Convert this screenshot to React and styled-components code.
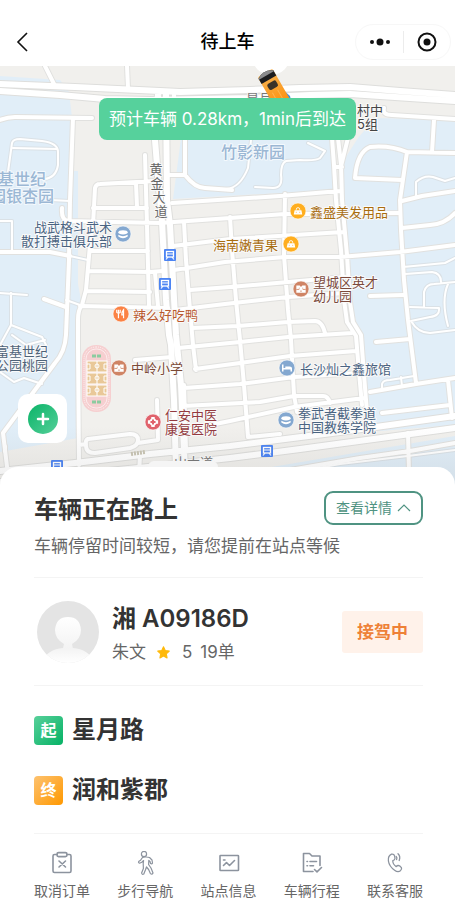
import React from "react";
import styled, { createGlobalStyle, css } from "styled-components";

const GlobalStyle = createGlobalStyle`
  *, *::before, *::after { box-sizing: border-box; }
  body {
    margin: 0;
    background: #fff;
    color: #333;
    font-family: Inter, "Noto Sans CJK SC", sans-serif;
  }
  button { font: inherit; color: inherit; border: 0; padding: 0; background: none; cursor: pointer; }
  h1, h2, p { margin: 0; }
`;

const Page = styled.div`
  display: flex;
  flex-direction: column;
  min-height: 100vh;
  background: #fff;
`;

/* ---------- header ---------- */

const Header = styled.header`
  display: grid;
  grid-template-columns: 1fr auto 1fr;
  align-items: center;
  height: 66px;
  padding: 18px 4px 0;
`;

const BackButton = styled.button`
  display: flex;
  justify-self: start;
  margin-left: 8px;
`;

const Title = styled.h1`
  font-size: 18px;
  line-height: 26px;
  font-weight: 500;
  color: #000;
`;

const Capsule = styled.div`
  justify-self: end;
  display: flex;
  align-items: center;
  height: 36px;
  border: 1px solid #f7f7f7;
  border-radius: 18px;
`;

const CapsuleButton = styled.button`
  display: flex;
  align-items: center;
  justify-content: center;
  width: 47px;
  height: 22px;
  & + & { border-left: 1px solid #ececec; }
`;

/* ---------- map ---------- */

const MapArea = styled.section`
  position: relative;
  height: 420px;
  overflow: hidden;
  background: #f1f0ed;
`;

const MapSvg = styled.svg`
  display: block;
  width: 100%;
  height: 100%;
`;

const Eta = styled.div`
  position: absolute;
  top: 32px;
  left: 0;
  right: 0;
  display: flex;
  justify-content: center;
`;

const EtaPill = styled.p`
  padding: 8px 10px;
  border-radius: 8px;
  background: #56d19c;
  color: #fff;
  font-size: 17px;
  line-height: 26px;
  font-weight: 400;
`;

const AddButton = styled.button`
  position: absolute;
  left: 18px;
  bottom: 43px;
  display: flex;
  align-items: center;
  justify-content: center;
  width: 49px;
  height: 49px;
  border-radius: 10px;
  background: #fff;
`;

const MapText = styled.text`
  font-size: ${(p) => (p.$area ? 16 : 13)}px;
  font-weight: ${(p) => (p.$area ? 500 : 400)};
  fill: ${(p) => p.$color};
  stroke: ${(p) => (p.$area ? "#f4f9fd" : "#fafafa")};
  stroke-width: 2px;
  stroke-linejoin: round;
  paint-order: stroke;
`;

/* ---------- bottom sheet ---------- */

const Sheet = styled.main`
  position: relative;
  flex: 1;
  margin-top: -19px;
  padding: 24px 32px 0 34px;
  border-radius: 18px 18px 0 0;
  background: #fff;
`;

const section = css`
  border-bottom: 1px solid #f4f4f4;
`;

const StatusBlock = styled.section`
  ${section}
  padding-bottom: 19px;
`;

const StatusRow = styled.div`
  display: flex;
  align-items: center;
  justify-content: space-between;
`;

const Heading = styled.h2`
  padding-top: 4px;
  font-size: 24px;
  line-height: 30px;
  font-weight: 700;
`;

const DetailButton = styled.button`
  display: flex;
  align-items: center;
  gap: 5px;
  height: 34px;
  padding: 0 10px;
  border: 2px solid #4f9382;
  border-radius: 9px;
  color: #4f9382;
  font-size: 14px;
  line-height: 20px;
`;

const Hint = styled.p`
  margin-top: 9px;
  font-size: 17px;
  line-height: 24px;
  font-weight: 400;
  color: #666;
`;

const DriverBlock = styled.section`
  ${section}
  display: flex;
  align-items: center;
  padding: 22px 0 21px 2px;
`;

const DriverInfo = styled.div`
  flex: 1;
  display: flex;
  flex-direction: column;
  gap: 5px;
  padding: 3px 0 0 12px;
`;

const Plate = styled.p`
  font-size: 24px;
  line-height: 32px;
  font-weight: 600;
`;

const DriverMeta = styled.p`
  display: flex;
  align-items: center;
  font-size: 17px;
  line-height: 24px;
  font-weight: 400;
  color: #666;
`;

const Rating = styled.span`
  display: inline-flex;
  align-items: center;
  gap: 12px;
  padding: 0 8px 0 11px;
`;

const StateTag = styled.span`
  padding: 8px 15px;
  border-radius: 3px;
  background: #fff2ea;
  color: #ee8137;
  font-size: 17px;
  line-height: 26px;
  font-weight: 700;
`;

const RouteList = styled.ul`
  ${section}
  display: flex;
  flex-direction: column;
  gap: 28px;
  margin: 0;
  padding: 28px 0 27px;
  list-style: none;
`;

const Stop = styled.li`
  display: flex;
  align-items: center;
  gap: 9px;
  font-size: 24px;
  line-height: 32px;
  font-weight: 700;
`;

const StopBadge = styled.span`
  display: flex;
  align-items: center;
  justify-content: center;
  width: 29px;
  height: 29px;
  border-radius: 4px;
  color: #fff;
  font-size: 16px;
  line-height: 24px;
  background: ${(p) =>
    p.$end
      ? "linear-gradient(135deg, #fdc270, #ff9800)"
      : "linear-gradient(135deg, #58d09a, #06b265)"};
`;

const Actions = styled.nav`
  display: flex;
  justify-content: space-between;
  padding: 17px 0 13px;
`;

const Action = styled.button`
  display: flex;
  flex-direction: column;
  align-items: center;
  gap: 6px;
  color: #666;
  font-size: 14px;
  line-height: 20px;
  white-space: nowrap;
`;

/* ---------- map data ---------- */

const wideRoads = [
  "M0 84 L75 87 L160 91 L180 92 L250 90 L300 88 L350 87 L400 91 L455 95",
  "M0 91 L60 95 L105 99 L150 100 L250 98 L310 95 L350 94 L455 101",
  "M158 94 L155 140 L157 165 L162 222 L166 300 L169 335 L171 345 L174 400 L176 470",
  "M166 94 L167 200 L170 225 L173 280 L176 335 L181 385 L184 450 L185 470",
  "M0 471 L75 463 L150 454 L230 446 L340 432 L455 416",
  "M0 482 L148 467 L230 458 L300 449 L455 428",
];

const roads = [
  "M332 138 L334 165 L336 200 L341 250 L344 300 L347 322 L356 336 L359 372 L362 405",
  "M338 138 L341 165 L342 200 L347 255 L350 302 L353 322 L361 335 L364 375 L368 425",
  "M0 252 L50 252 L70 256",
  "M73 118 L70 200 L69 260 L66 335 Q65 352 55 363 L3 433 L8 475",
  "M0 120 Q8 117 15 117 L92 118",
  "M45 66 L54 84",
  "M127 66 L128 88",
  "M174 92 L174 104",
  "M93 225 L95 188 Q96 184 100 184 L155 181",
  "M136 183 L137 207",
  "M145 155 L147 225 L149 306",
  "M93 220 L90 245 L86 290 L82 305 Q78 310 78 320 L78 345 L79 465",
  "M62 208 Q61 220 68 221 L160 223 L230 218 L285 214 L398 213",
  "M93 208 L147 208",
  "M91 251 L148 251",
  "M88 271 L150 272 L163 271",
  "M87 291 L150 292",
  "M155 273 L158 306",
  "M80 306 L168 308",
  "M173 246 L230 239 L343 232",
  "M174 270 L225 262 L285 257 L340 257 L400 252 L455 245",
  "M190 290 L230 287 L345 277",
  "M175 310 L225 304 L288 297 L345 293",
  "M192 328 L238 326 L288 322 L315 321 Q322 321 325 333",
  "M178 348 L240 342 L288 337 L352 333",
  "M195 369 L240 363 L290 356 L356 351",
  "M184 388 L240 384 L294 377 L360 373",
  "M183 406 L260 402 L294 396 L323 396 Q328 396 330 403",
  "M186 430 L230 421 L294 407 L364 398",
  "M184 222 L186 260 L190 310 L193 345 L196 370",
  "M184 385 L186 450",
  "M230 217 L232 250 L236 300 L240 340 L244 385 L248 437 L280 434",
  "M285 194 L284 255 L288 310 L291 340 L294 395 L297 412",
  "M172 203 L280 196 L340 191",
  "M167 175 L185 175",
  "M185 138 L185 175 Q195 188 205 188 L232 190",
  "M348 138 L341 166",
  "M334 167 L342 167",
  "M384 108 Q382 115 392 115 L455 119",
  "M434 120 L432 152",
  "M455 153 L407 152 Q390 145 370 147 Q357 152 355 178 L402 180",
  "M407 152 L400 200 L401 230 L404 280 L408 320 L416 383",
  "M402 228 L430 225 Q445 224 455 213",
  "M402 201 L422 196 L455 191",
  "M370 296 L403 295",
  "M376 342 L410 339",
  "M370 392 L416 384 L455 378",
  "M448 380 L452 418",
  "M382 413 L450 405",
  "M135 360 L172 357",
  "M157 400 L158 440 L138 443",
  "M79 445 L86 444",
  "M88 439 L130 434 Q138 434 138 440 Q138 446 130 448 L95 453 Q86 453 86 446 Q85 440 88 439",
  "M408 433 L409 474",
  "M200 482 L290 470 L360 458 L410 451 L455 443",
  "M44 299 L66 307",
  "M140 455 L139 474",
  "M5 446 L5 452",
];

const thinRoads = [
  "M8 172 L12 143 Q13 139 20 139 L42 141 Q58 143 58 152 L58 165 Q56 178 44 179",
  "M13 148 L57 149",
  "M50 200 L70 201",
  "M0 221 L12 221 L12 250",
  "M70 256 L88 260",
  "M0 293 L27 295",
  "M11 293 L11 325 L42 337 L46 345",
  "M11 325 L0 345",
  "M66 300 L80 305",
  "M0 372 L14 382 L24 378 L42 384 M12 335 L26 345 L45 340",
  "M308 143 L325 151 L320 158 Q316 161 300 160 L286 161 Q281 163 281 175 Q283 188 273 188 L255 187",
  "M251 140 L248 168 Q240 188 226 189",
  "M416 196 L416 182 Q424 175 433 177 L445 181 L455 178",
  "M403 267 L445 263 L455 258",
  "M405 274 L432 272 Q441 273 441 282",
  "M424 307 L424 292 Q426 284 434 284 L455 282",
  "M448 284 Q441 300 448 326",
  "M410 307 L439 308 Q440 316 430 317 L411 321 Q418 333 430 333 L455 330",
  "M382 390 L382 384 Q383 380 390 380 L414 376",
  "M401 377 L402 386",
  "M240 482 L340 464 L408 456 L455 450",
];

const drawRoads = (list, color, width) => (
  <path d={list.join(" ")} fill="none" stroke={color} strokeWidth={width} strokeLinejoin="round" strokeLinecap="round" />
);

const places = [
  { x: 112, y: 232, anchor: "end", color: "#4a6482", lines: ["战武格斗武术", "散打搏击俱乐部"] },
  { x: 310, y: 217, color: "#a96d10", lines: ["鑫盛美发用品"] },
  { x: 278, y: 250, anchor: "end", color: "#a96d10", lines: ["海南嫩青果"] },
  { x: 313, y: 287, color: "#7b4a3c", lines: ["望城区英才", "幼儿园"] },
  { x: 133, y: 320, color: "#b95a30", lines: ["辣么好吃鸭"] },
  { x: 131, y: 373, color: "#7b4a36", lines: ["中岭小学"] },
  { x: 300, y: 374, color: "#4a6482", lines: ["长沙灿之鑫旅馆"] },
  { x: 165, y: 420, color: "#933a40", lines: ["仁安中医", "康复医院"] },
  { x: 298, y: 418, color: "#4a6482", lines: ["拳武者截拳道", "中国教练学院"] },
  { x: 48, y: 356, anchor: "end", color: "#4e6379", lines: ["富基世纪", "公园桃园"] },
  { x: 357, y: 115, color: "#444", lines: ["村中", "5组"] },
  { x: 246, y: 103, color: "#777", lines: ["星月路"] },
  { x: 46, y: 185, anchor: "end", area: true, color: "#9bb7d4", lines: ["基世纪", "园银杏园"] },
  { x: 221, y: 158, area: true, color: "#9bb7d4", lines: ["竹影新园"] },
  { x: 174, y: 467, color: "#777", lines: ["山大道"] },
];

const roadName = [
  ["黄", 156, 174],
  ["金", 157, 188],
  ["大", 159, 202],
  ["道", 161, 216],
];

const glyphs = {
  bag: (
    <>
      <path d="M-4 -1 H4 L5 4 H-5 Z" fill="#fff" />
      <path d="M-2 -1 V-2 a2 2 0 0 1 4 0 V-1" fill="none" stroke="#fff" strokeWidth="1" />
      <path d="M-2 1 v1 M2 1 v1" stroke="#ffac1c" strokeWidth="1" />
    </>
  ),
  drum: (
    <>
      <ellipse cy="-2" rx="5.500" ry="2.500" fill="#fff" />
      <path d="M-5.500 1 Q0 4 5.500 1 V3 Q0 7 -5.500 3 Z" fill="#fff" />
    </>
  ),
  school: (
    <>
      <path d="M-5.500 -4 H-1.500 L0 -2.500 L1.500 -4 H5.500 V4.500 H-5.500 Z" fill="#fff" />
      <path d="M-5.500 0.500 H-2 M2 0.500 H5.500 M-2 -1.500 v1 M2 -1.500 v1 M-1 2.500 h2" stroke="#cf8465" strokeWidth="1" />
    </>
  ),
  food: (
    <path d="M-3 -5 v10 M-5 -5 v3 q2 2 4 0 v-3 M3 5 v-10 q-2 2 -2 6 h2" fill="none" stroke="#fff" strokeWidth="1.4" />
  ),
  bed: <path d="M-5 -4 V4 M5 4 V1 H-5 M-2 -1 H3 Q5 -1 5 1" fill="none" stroke="#fff" strokeWidth="1.8" />,
  medical: (
    <>
      <path d="M-2 -6 H2 V-4 L4 -2 H6 V2 H4 L2 4 V6 H-2 V4 L-4 2 H-6 V-2 H-4 L-2 -4 Z" fill="#fff" />
      <path d="M0 -3 V3 M-3 0 H3" stroke="#e0626c" strokeWidth="2.400" />
    </>
  ),
};

const pois = [
  [298, 211, "#ffae1f", "bag"],
  [291, 244, "#ffae1f", "bag"],
  [123, 234, "#84a8d0", "drum"],
  [301, 289, "#cf8465", "school"],
  [121, 314, "#fb8244", "food"],
  [119, 368, "#cf8465", "school"],
  [287, 368, "#84a8d0", "bed"],
  [153, 422, "#e0626c", "medical"],
  [286, 420, "#84a8d0", "drum"],
];

const stations = [
  [170, 255],
  [165, 284],
  [267, 451],
  [57, 466],
];

function CityMap() {
  return (
    <MapSvg viewBox="0 66 455 420" preserveAspectRatio="xMidYMid slice" role="img" aria-label="地图">
      <defs>
        <linearGradient id="shade" x1="0" y1="0" x2="0" y2="1">
          <stop offset="0" stopColor="#555" stopOpacity="0" />
          <stop offset="1" stopColor="#555" stopOpacity="0.1" />
        </linearGradient>
        <linearGradient id="car" x1="0" y1="0" x2="0" y2="1">
          <stop offset="0" stopColor="#f6b352" />
          <stop offset="1" stopColor="#ff8a00" />
        </linearGradient>
      </defs>
      <rect y="66" width="455" height="420" fill="#f1f0ed" />
      <g fill="#e1eef8">
        <path d="M0 76 L60 80 L69 92 L72 118 V171 H78 V284 L81 300 L77 318 L78 438 L0 452 Z" />
        <path d="M181 138 L173 199 L333 190 L331 138 Z" />
        <path d="M375 118 L455 120 V425 L368 432 L360 335 L350 300 L343 200 L344 160 L358 138 Z" />
        <path d="M160 486 L455 436 V486 Z" />
      </g>
      {drawRoads(thinRoads, "#dae1e6", 4)}
      {drawRoads(roads, "#e1e1df", 6)}
      {drawRoads(wideRoads, "#dededc", 8)}
      {drawRoads(thinRoads, "#fff", 2)}
      {drawRoads(roads, "#fff", 4)}
      {drawRoads(wideRoads, "#fff", 6)}

      <g>
        <rect x="82" y="345" width="29" height="67" rx="14" fill="#f6cfd0" />
        <rect x="84" y="347" width="25" height="63" rx="12" fill="none" stroke="#fff" strokeOpacity="0.7" strokeDasharray="1 1" />
        <rect x="86" y="349" width="21" height="59" rx="10" fill="none" stroke="#fff" strokeOpacity="0.6" />
        {[361, 373, 385].map((y) => (
          <g key={y} stroke="#fff" fill="none">
            <rect x="87" y={y} width="20" height="11" fill="#e9c898" />
            <path d={`M97 ${y} v11 M87 ${y + 3} h3 v5 h-3 M107 ${y + 3} h-3 v5 h3`} />
            <circle cx="97" cy={y + 5} r="2" />
          </g>
        ))}
        <path d="M92 356 h9 M92 402 h9" stroke="#8ccca0" strokeWidth="3" strokeDasharray="4 1" />
      </g>
      <path d="M131 454 L145 452" stroke="#c9c5b4" strokeWidth="4" strokeDasharray="2 1" />

      {roadName.map(([t, x, y]) => (
        <MapText key={t} x={x} y={y} $color="#666" textAnchor="middle">{t}</MapText>
      ))}
      {places.map((p) => (
        <MapText key={p.lines.join("")} $color={p.color} $area={p.area} textAnchor={p.anchor || "start"}>
          {p.lines.map((line, i) => (
            <tspan key={line} x={p.area && i ? p.x + 8 : p.x} y={p.y + i * (p.area ? 17 : 14)}>{line}</tspan>
          ))}
        </MapText>
      ))}
      {pois.map(([x, y, color, kind]) => (
        <g key={`${x}-${y}`} transform={`translate(${x} ${y})`}>
          <circle r="8" fill={color} stroke="#fff" strokeOpacity="0.6" />
          <g transform="scale(0.85)">{glyphs[kind]}</g>
        </g>
      ))}
      {stations.map(([x, y]) => (
        <g key={`${x}-${y}`} transform={`translate(${x} ${y})`}>
          <rect x="-6" y="-6" width="12" height="12" rx="1" fill="#4c84f3" />
          <rect x="-3.500" y="-3.500" width="7" height="5.500" fill="none" stroke="#fff" strokeWidth="1.3" />
          <path d="M-3 -1 H3 M-2 2 L-4 4.500 M2 2 L4 4.500" stroke="#fff" strokeWidth="1.2" />
        </g>
      ))}
      <rect y="426" width="455" height="60" fill="url(#shade)" />
      <rect x="148" y="461" width="70" height="20" rx="6" fill="#f5f5f5" />

      <circle cx="271" cy="56" r="19" fill="#fff" />
      <path d="M281 88 L290 96 L292 104 L282 104 Z" fill="#3f8fe0" />
      <g transform="translate(265 74) rotate(-30)">
        <rect x="-8" y="-1" width="17" height="42" rx="2" fill="url(#car)" />
        <path d="M-8 1 Q0 -5 9 1 V7 H-8 Z" fill="#1d1d1f" />
        <path d="M-8 1 Q0 -5 9 1 V2 H-8 Z" fill="#8b8b8d" />
        <rect x="-4" y="10" width="10" height="7" rx="2" fill="#3a3228" />
        <path d="M-3 20 V38 M3 20 V38" stroke="#ffc978" strokeOpacity="0.5" />
      </g>
    </MapSvg>
  );
}

/* ---------- icons ---------- */

const ActionIcon = ({ children }) => (
  <svg width="24" height="24" viewBox="0 0 24 24" fill="none" stroke="#8c939e" strokeWidth="1.6" strokeLinecap="round" strokeLinejoin="round" aria-hidden="true">
    {children}
  </svg>
);

const actions = [
  {
    label: "取消订单",
    icon: (
      <>
        <path d="M7 3.500 H4.500 Q3 3.500 3 5 V20 Q3 21.500 4.500 21.500 H19.500 Q21 21.500 21 20 V5 Q21 3.500 19.500 3.500 H17" />
        <rect x="7" y="1.600" width="10" height="4" rx="1.600" />
        <path d="M9 10 L15.500 16 M15.500 10 L9 16" />
      </>
    ),
  },
  {
    label: "步行导航",
    icon: (
      <g strokeWidth="1.2">
        <circle cx="11" cy="3" r="2.600" />
        <path d="M9.500 6.500 Q11 5.500 13.500 6 L16.500 6.500 L19 9 L19.500 12 Q19 13.500 17.600 12.600 L17 10.500 L15.800 9.500 L15.600 13.500 L18 17 L20 22 Q19.200 24 17.400 22.600 L15.600 18.500 L13.500 16 L12.400 19 L10.800 23 Q9 24 8.600 22 L10.400 17.500 L10.200 12.500 L10.600 9.500 L8.800 11.200 L6.600 12.200 Q4.800 11.500 6 10.200 L7.600 9.200 Z" />
      </g>
    ),
  },
  {
    label: "站点信息",
    icon: (
      <>
        <rect x="3" y="4.500" width="18.500" height="15" rx="0.600" />
        <path d="M6.500 14.500 L9.500 11.500 L12.500 14.500 L17.500 9.500 M6.500 9 H8" />
      </>
    ),
  },
  {
    label: "车辆行程",
    icon: (
      <>
        <path d="M12 20.500 H3.500 V2.500 H9.500 L12 5 H20 V14.500 M12 20.500 H13" />
        <path d="M7 10.500 H7.500 M10 10.500 H16.500 M7 14.800 H7.500 M10 14.800 H13.500 M14.500 18.500 L17 20.800 L21.500 16.500" />
      </>
    ),
  },
  {
    label: "联系客服",
    icon: (
      <g strokeWidth="1.300">
        <path d="M8.500 3.200 Q11 2.800 11.600 5 L12 7.500 Q11.800 9.300 9.800 9.600 Q9.600 13 13.200 15.600 Q14.800 13.800 16.800 15 L18.400 16.600 Q19.200 18.400 17.400 19.800 Q14.800 21.600 11.600 19.200 Q6.200 15.400 5.400 10 Q4.800 5 8.500 3.200 Z" />
        <path d="M13.200 5.500 Q14.400 6.600 13.600 8.600 M15 2.800 Q17.800 5.500 16.200 9.500" />
      </g>
    ),
  },
];

export default function App() {
  return (
    <Page>
      <GlobalStyle />
      <Header>
        <BackButton aria-label="返回">
          <svg width="20" height="24" viewBox="0 0 20 24" fill="none" stroke="#111" strokeWidth="1.600">
            <path d="M15 3 L6 12 L15 21" />
          </svg>
        </BackButton>
        <Title>待上车</Title>
        <Capsule>
          <CapsuleButton aria-label="更多">
            <svg width="22" height="8" viewBox="0 0 22 8" fill="#111">
              <circle cx="3" cy="4" r="2" />
              <circle cx="11" cy="4" r="3.500" />
              <circle cx="19" cy="4" r="2" />
            </svg>
          </CapsuleButton>
          <CapsuleButton aria-label="关闭">
            <svg width="20" height="20" viewBox="0 0 20 20">
              <circle cx="10" cy="10" r="8.500" fill="none" stroke="#111" strokeWidth="2" />
              <circle cx="10" cy="10" r="3.500" fill="#111" />
            </svg>
          </CapsuleButton>
        </Capsule>
      </Header>

      <MapArea>
        <CityMap />
        <Eta>
          <EtaPill>预计车辆 0.28km，1min后到达</EtaPill>
        </Eta>
        <AddButton aria-label="添加">
          <svg width="30" height="30" viewBox="0 0 30 30">
            <defs>
              <linearGradient id="add" x1="0" y1="0" x2="1" y2="1">
                <stop offset="0" stopColor="#0ab468" />
                <stop offset="1" stopColor="#55cf99" />
              </linearGradient>
            </defs>
            <circle cx="15" cy="15" r="15" fill="url(#add)" />
            <path d="M15 10 V20 M10 15 H20" stroke="#fff" strokeWidth="2.500" strokeLinecap="round" />
          </svg>
        </AddButton>
      </MapArea>

      <Sheet>
        <StatusBlock>
          <StatusRow>
            <Heading>车辆正在路上</Heading>
            <DetailButton>
              查看详情
              <svg width="14" height="10" viewBox="0 0 14 10" fill="none" stroke="#4f9382" strokeWidth="1.200">
                <path d="M1 8 L7 2 L13 8" />
              </svg>
            </DetailButton>
          </StatusRow>
          <Hint>车辆停留时间较短，请您提前在站点等候</Hint>
        </StatusBlock>

        <DriverBlock>
          <svg width="64" height="62" viewBox="0 0 64 62" aria-hidden="true">
            <defs>
              <clipPath id="avatar"><circle cx="32" cy="31" r="31" /></clipPath>
              <linearGradient id="face" x1="0" y1="0" x2="0" y2="1">
                <stop offset="0" stopColor="#fff" />
                <stop offset="1" stopColor="#f3f3f3" />
              </linearGradient>
              <linearGradient id="body" x1="0" y1="0" x2="0" y2="1">
                <stop offset="0" stopColor="#f3f3f3" />
                <stop offset="1" stopColor="#fff" />
              </linearGradient>
            </defs>
            <g clipPath="url(#avatar)">
              <rect width="64" height="62" fill="#e4e4e4" />
              <path d="M27 47 L28 43 Q19 38 19 29 Q20 16 32 16 Q44 16 45 29 Q45 38 36 43 L37 48 H27 Z" fill="url(#face)" />
              <path d="M4 62 Q12 48 27 47 L37 47 Q52 48 60 62 Z" fill="url(#body)" />
            </g>
          </svg>
          <DriverInfo>
            <Plate>湘 A09186D</Plate>
            <DriverMeta>
              朱文
              <Rating>
                <svg width="13" height="13" viewBox="0 0 24 24" fill="#ffb90a" stroke="#ffb90a" strokeWidth="2" strokeLinejoin="round" aria-hidden="true">
                  <path d="M12 1.500 L15.200 8.400 L22.700 9.300 L17.200 14.500 L18.600 22 L12 18.300 L5.400 22 L6.800 14.500 L1.300 9.300 L8.800 8.400 Z" />
                </svg>
                5
              </Rating>
              19单
            </DriverMeta>
          </DriverInfo>
          <StateTag>接驾中</StateTag>
        </DriverBlock>

        <RouteList>
          <Stop><StopBadge>起</StopBadge>星月路</Stop>
          <Stop><StopBadge $end>终</StopBadge>润和紫郡</Stop>
        </RouteList>

        <Actions>
          {actions.map((a) => (
            <Action key={a.label}>
              <ActionIcon>{a.icon}</ActionIcon>
              {a.label}
            </Action>
          ))}
        </Actions>
      </Sheet>
    </Page>
  );
}
